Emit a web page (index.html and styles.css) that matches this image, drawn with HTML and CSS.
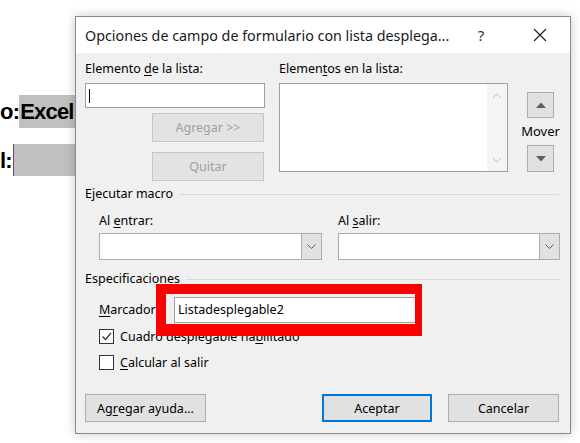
FILE: index.html
```html
<!DOCTYPE html>
<html lang="es">
<head>
<meta charset="utf-8">
<title>Opciones de campo de formulario</title>
<link rel="stylesheet" href="styles.css">
</head>
<body>
<div class="doc">
  <div class="doc-line"><span class="pre">o:</span><span class="hl">Excel</span></div>
  <div class="doc-line"><span class="pre">l:</span><span class="field"></span></div>
</div>

<div class="dialog">
  <div class="titlebar">
    <span class="title">Opciones de campo de formulario con lista desplega...</span>
    <span class="help">?</span>
    <span class="close"><svg width="14" height="14" viewBox="0 0 14 14"><path d="M1 1 L13 13 M13 1 L1 13" stroke="#222" stroke-width="1.2" fill="none"/></svg></span>
  </div>
  <div class="dbody">
    <div class="top">
      <div class="col-a">
        <div class="lbl">Elemento <u>d</u>e la lista:</div>
        <div class="input"><span class="caret"></span></div>
        <div class="btn disabled add">Agregar &gt;&gt;</div>
        <div class="btn disabled remove">Quitar</div>
      </div>
      <div class="col-b">
        <div class="lbl">Elemen<u>t</u>os en la lista:</div>
        <div class="listbox">
          <div class="list-area"></div>
          <div class="vscroll">
            <svg width="10" height="6" viewBox="0 0 10 6"><path d="M1 5 L5 1 L9 5" stroke="#c2c2c2" stroke-width="1" fill="none"/></svg>
            <svg width="10" height="6" viewBox="0 0 10 6"><path d="M1 1 L5 5 L9 1" stroke="#c2c2c2" stroke-width="1" fill="none"/></svg>
          </div>
        </div>
      </div>
      <div class="col-c">
        <div class="movebtn"><svg width="10" height="6" viewBox="0 0 10 6"><path d="M0 6 L5 0.5 L10 6 Z" fill="#606060"/></svg></div>
        <div class="mover">Mover</div>
        <div class="movebtn down"><svg width="10" height="6" viewBox="0 0 10 6"><path d="M0 0 L5 5.5 L10 0 Z" fill="#606060"/></svg></div>
      </div>
    </div>

    <div class="group g1"><span>Ejecutar macro</span><span class="rule"></span></div>
    <div class="macro">
      <div class="mfield">
        <div class="lbl">Al <u>e</u>ntrar:</div>
        <div class="combo"><div class="combo-text"></div><div class="combo-btn"><svg width="9" height="5" viewBox="0 0 9 5"><path d="M0.5 0.5 L4.5 4.5 L8.5 0.5" stroke="#606060" stroke-width="1" fill="none"/></svg></div></div>
      </div>
      <div class="mfield second">
        <div class="lbl">Al <u>s</u>alir:</div>
        <div class="combo"><div class="combo-text"></div><div class="combo-btn"><svg width="9" height="5" viewBox="0 0 9 5"><path d="M0.5 0.5 L4.5 4.5 L8.5 0.5" stroke="#606060" stroke-width="1" fill="none"/></svg></div></div>
      </div>
    </div>

    <div class="group g2"><span>Especificaciones</span><span class="rule"></span></div>
    <div class="bookmark">
      <div class="lbl"><u>M</u>arcador:</div>
      <div class="input text">Listadesplegable2</div>
    </div>
    <div class="check c1">
      <span class="box"><svg width="13" height="13" viewBox="0 0 13 13"><path d="M2.5 6.5 L5.5 9.5 L11 3" stroke="#333" stroke-width="1.2" fill="none"/></svg></span>
      <span>Cuadro desplegable ha<u>b</u>ilitado</span>
    </div>
    <div class="check c2">
      <span class="box"></span>
      <span><u>C</u>alcular al salir</span>
    </div>

    <div class="footer">
      <div class="btn help-btn">Ag<u>r</u>egar ayuda...</div>
      <div class="btn ok">Aceptar</div>
      <div class="btn cancel">Cancelar</div>
    </div>
  </div>
  <div class="redbox"></div>
</div>
</body>
</html>
```

FILE: styles.css
```css
* { box-sizing: border-box; }

html, body {
  margin: 0;
  padding: 0;
  background: #ffffff;
  width: 580px;
  height: 443px;
  overflow: hidden;
  position: relative;
}

body {
  font-family: "Noto Sans", "Open Sans", sans-serif;
  font-size: 12.5px;
  color: #000;
}

/* background document */
.doc {
  padding-top: 95px;
  display: flex;
  flex-direction: column;
  gap: 16px;
  font-family: "Liberation Sans", Arial, sans-serif;
  font-weight: bold;
  font-size: 22px;
  letter-spacing: -0.8px;
}
.doc-line {
  display: flex;
  height: 33px;
  line-height: 34px;
}
.hl {
  background: #c0c0c0;
  padding: 0 2px 0 1px;
}
.field {
  width: 70px;
  height: 32px;
  background: #c0c0c0;
  border-left: 1px solid #555;
  margin-left: 1px;
}

/* dialog window */
.dialog {
  position: absolute;
  left: 75px;
  top: 16px;
  width: 496px;
  height: 418px;
  border: 1px solid #8a8a8a;
  background: #f0f0f0;
  box-shadow: 0 0 10px rgba(0,0,0,0.22);
  display: flex;
  flex-direction: column;
}

.titlebar {
  height: 36px;
  background: #ffffff;
  display: flex;
  align-items: center;
  padding-left: 9px;
  font-size: 14.3px;
  color: #1a1a1a;
}
.title { flex: 1; white-space: nowrap; }
.help {
  width: 20px;
  margin-right: 42px;
  text-align: center;
  font-size: 15px;
  color: #333;
}
.close {
  width: 14px;
  height: 14px;
  margin-right: 23px;
  display: flex;
}

.dbody {
  flex: 1;
  padding: 8px 10px 0 9px;
  display: flex;
  flex-direction: column;
}

.lbl {
  line-height: 16px;
  height: 16px;
  white-space: nowrap;
}
u { text-decoration-thickness: 1px; text-underline-offset: 2px; }

.top {
  display: flex;
  height: 120px;
}
.col-a {
  width: 180px;
  display: flex;
  flex-direction: column;
  align-items: flex-start;
}
.input {
  width: 180px;
  height: 25px;
  margin-top: 6px;
  background: #fff;
  border: 1px solid #a0a0a0;
  position: relative;
}
.caret {
  display: block;
  width: 1px;
  height: 14px;
  background: #000;
  margin: 5px 0 0 3px;
}

.btn {
  height: 29px;
  border: 1px solid #adadad;
  background: #e1e1e1;
  display: flex;
  align-items: center;
  justify-content: center;
  white-space: nowrap;
}
.btn.disabled {
  color: #a0a0a0;
  background: #e3e3e3;
  border-color: #c6c6c6;
  width: 112px;
  margin-left: 67px;
}
.btn.add { margin-top: 5px; }
.btn.remove { margin-top: 10px; }

.col-b {
  width: 229px;
  margin-left: 14px;
  display: flex;
  flex-direction: column;
}
.listbox {
  margin-top: 6px;
  height: 89px;
  border: 1px solid #a0a0a0;
  background: #fff;
  display: flex;
}
.list-area { flex: 1; }
.vscroll {
  width: 20px;
  background: #f4f4f4;
  display: flex;
  flex-direction: column;
  justify-content: space-between;
  align-items: center;
  padding: 9px 0 8px;
}

.col-c {
  width: 27px;
  margin-left: 19px;
  display: flex;
  flex-direction: column;
  align-items: center;
  padding-top: 31px;
}
.movebtn {
  width: 27px;
  height: 26px;
  border: 1px solid #adadad;
  background: #e1e1e1;
  display: flex;
  align-items: center;
  justify-content: center;
  flex-shrink: 0;
}
.movebtn.down { height: 27px; margin-top: 6px; }
.mover {
  margin-top: 5px;
  line-height: 16px;
  height: 16px;
  font-size: 13px;
  white-space: nowrap;
}

.group {
  display: flex;
  align-items: center;
  line-height: 16px;
  height: 16px;
}
.group .rule {
  flex: 1;
  height: 1px;
  background: #d8d8d8;
  margin-left: 6px;
  margin-right: 1px;
}
.g1 { margin-top: 5px; }
.g2 { margin-top: 11px; }

.macro {
  display: flex;
  gap: 16px;
  padding-left: 14px;
  margin-top: 11px;
}
.mfield { display: flex; flex-direction: column; width: 223px; }
.mfield.second { width: 222px; }
.combo {
  margin-top: 4px;
  height: 27px;
  border: 1px solid #adadad;
  background: #fff;
  display: flex;
}
.combo-text { flex: 1; }
.combo-btn {
  width: 20px;
  background: #e1e1e1;
  border-left: 1px solid #adadad;
  display: flex;
  align-items: center;
  justify-content: center;
}

.bookmark {
  display: flex;
  align-items: center;
  padding-left: 14px;
  margin-top: 10px;
  height: 26px;
}
.bookmark .lbl { width: 75px; }
.input.text {
  margin-top: 0;
  width: 245px;
  height: 26px;
  padding-left: 3px;
  line-height: 24px;
}

.check {
  display: flex;
  align-items: center;
  gap: 6px;
  padding-left: 14px;
  height: 15px;
  line-height: 15px;
}
.check.c1 { margin-top: 6px; }
.check.c2 { margin-top: 11px; }
.box {
  width: 15px;
  height: 15px;
  border: 1px solid #333;
  background: #fff;
  display: flex;
  align-items: center;
  justify-content: center;
}

.footer {
  display: flex;
  margin-top: 24px;
}
.footer .btn { height: 28px; }
.help-btn { width: 121px; }
.ok {
  width: 110px;
  margin-left: auto;
  border: 2px solid #0078d7;
}
.cancel { width: 111px; margin-left: 16px; margin-right: 1px; }

/* annotation overlay */
.redbox {
  position: absolute;
  left: 80px;
  top: 267px;
  width: 266px;
  height: 52px;
  border-style: solid;
  border-color: #ff0000;
  border-width: 10px 7px 12px 10px;
}
```
